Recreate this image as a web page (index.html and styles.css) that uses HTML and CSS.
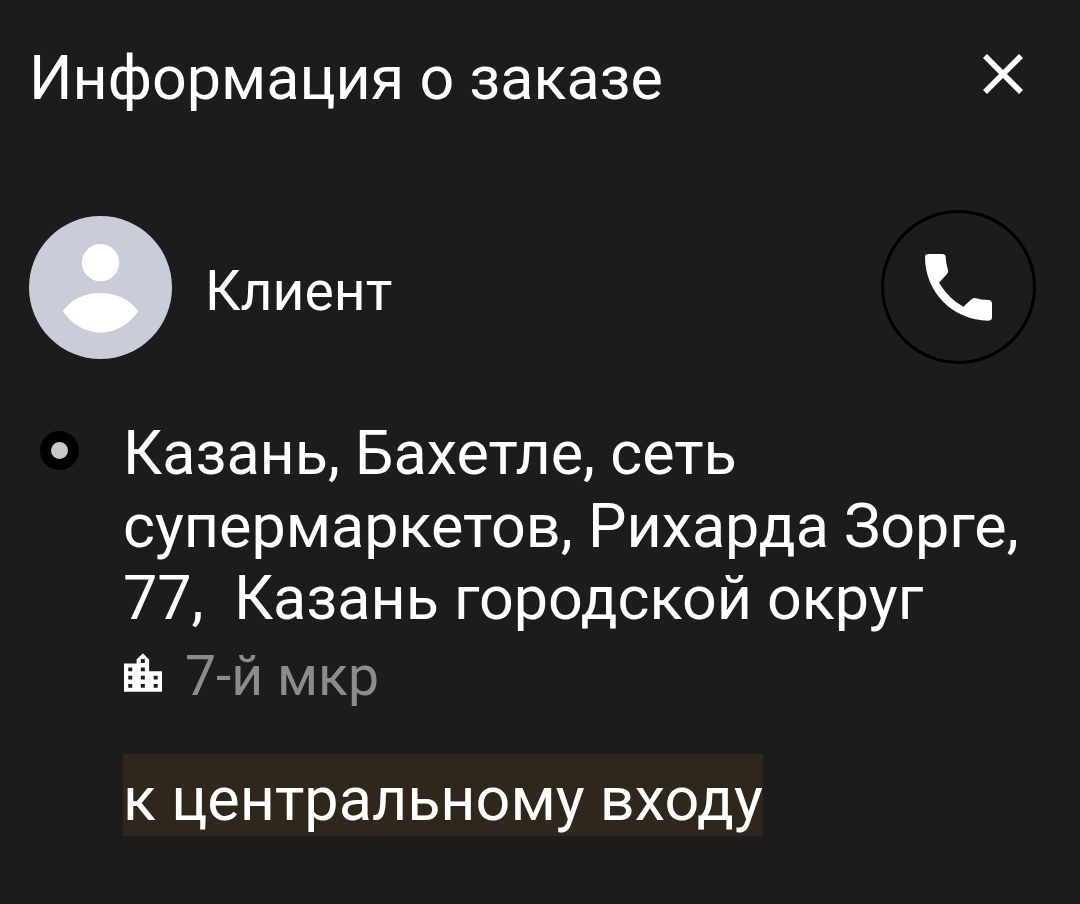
FILE: index.html
```html
<!DOCTYPE html>
<html lang="ru">
<head>
    <meta charset="UTF-8">
    <meta name="viewport" content="width=device-width, initial-scale=1.0">
    <title>Информация о заказе</title>
    <link rel="stylesheet" href="styles.css">
</head>
<body>
    <header class="header">
        <h1>Информация о заказе</h1>
        <button class="close-btn" aria-label="Закрыть">
            <svg width="42" height="42" viewBox="0 0 42 42">
                <path d="M3 3L39 39M39 3L3 39" stroke="#fff" stroke-width="5.6"/>
            </svg>
        </button>
    </header>

    <section class="client">
        <svg class="avatar" viewBox="0 0 144 144">
            <circle cx="72" cy="72" r="72" fill="#c9cdd9"/>
            <circle cx="72" cy="47" r="18.8" fill="#fff"/>
            <path d="M34 96C42 84 56 77.500 72 77.500S102 84 110 96C101 109 87 117.500 72 117.500S43 109 34 96z" fill="#fff"/>
        </svg>
        <span class="client-name">Клиент</span>
        <button class="call-btn" aria-label="Позвонить">
            <svg width="67" height="67" viewBox="0 0 201 201">
                <path fill="#fff" d="M10 0H52Q62 0 62 10Q63 30 69 48Q71 54 66 60L42 86Q72 135 115 158L138 137Q143 131 150 132Q168 138 190 138Q201 139 201 149V190Q201 200 190 200C85 200 0 115 0 10Q0 0 10 0z"/>
            </svg>
        </button>
    </section>

    <section class="route">
        <div class="route-track">
            <div class="route-dot"></div>
            <div class="route-line"></div>
        </div>
        <div class="route-info">
            <p class="address">Казань, Бахетле, сеть<br>супермаркетов, Рихарда Зорге,<br>77,&nbsp; Казань городской округ</p>
            <div class="district">
                <svg class="district-icon" width="38" height="39" viewBox="0 0 115 117">
                    <path fill="#fff" fill-rule="evenodd" d="M0 31H38V19L57 0L76 19V55H115V117H0zM13 43v12h12v-12zM13 68v12h12v-12zM13 93v12h12v-12zM51 18v12h12v-12zM51 43v12h12v-12zM51 68v12h12v-12zM51 93v12h12v-12zM90 68v12h12v-12zM90 93v12h12v-12z"/>
                </svg>
                <span>7-й мкр</span>
            </div>
            <p class="comment">к центральному входу</p>
        </div>
    </section>
</body>
</html>
```

FILE: styles.css
```css
* {
    box-sizing: border-box;
}
body {
    margin: 0;
    height: 904px;
    display: flex;
    flex-direction: column;
    overflow: hidden;
    background: #1c1c1c;
    color: #fff;
    font-family: Roboto, "Noto Sans", sans-serif;
}
h1, p {
    margin: 0;
    font-weight: 400;
}
button {
    padding: 0;
    border: none;
    background: none;
}
.header {
    display: flex;
    justify-content: space-between;
    align-items: flex-start;
    height: 162px;
    padding: 42px 56px 0 29px;
    border-bottom: 2px solid #1a1a1a;
}
.header h1 {
    font-size: 61px;
    line-height: 73px;
    white-space: nowrap;
}
.close-btn {
    height: 42px;
    margin-top: 11px;
}
.close-btn svg {
    display: block;
}
.client {
    display: flex;
    align-items: center;
    height: 154px;
    margin-top: 48px;
    padding: 0 44px 0 29px;
}
.avatar {
    width: 143px;
    height: 143px;
}
.client-name {
    margin-left: 33px;
    padding-top: 9px;
    font-size: 55.300px;
    line-height: 66px;
}
.call-btn {
    display: flex;
    align-items: center;
    justify-content: center;
    width: 155px;
    height: 154px;
    margin-left: auto;
    border: 3px solid #000;
    border-radius: 50%;
}
.route {
    display: flex;
    flex: 1;
    margin-top: 53px;
}
.route-track {
    display: flex;
    flex-direction: column;
    align-items: center;
    width: 123px;
    padding: 14px 5px 0 0;
}
.route-dot {
    width: 39px;
    height: 39px;
    border: 11px solid #000;
    border-radius: 50%;
    background: #c8c8c8;
}
.route-line {
    flex: 1;
    width: 2px;
    margin: 20px 0 0 6px;
    background: #1b1b1b;
}
.address {
    font-size: 61.040px;
    line-height: 72.600px;
    white-space: nowrap;
}
.district {
    display: flex;
    align-items: center;
    gap: 23px;
    height: 66px;
    margin-top: 9.200px;
    color: #8c8c8c;
    font-size: 55.300px;
    line-height: 66px;
}
.district-icon {
    margin: 0 0 8px 1px;
}
.comment {
    width: fit-content;
    height: 82px;
    margin-top: 44px;
    padding-top: 9px;
    background: #30271c;
    font-size: 61.080px;
    line-height: 73px;
}
```
